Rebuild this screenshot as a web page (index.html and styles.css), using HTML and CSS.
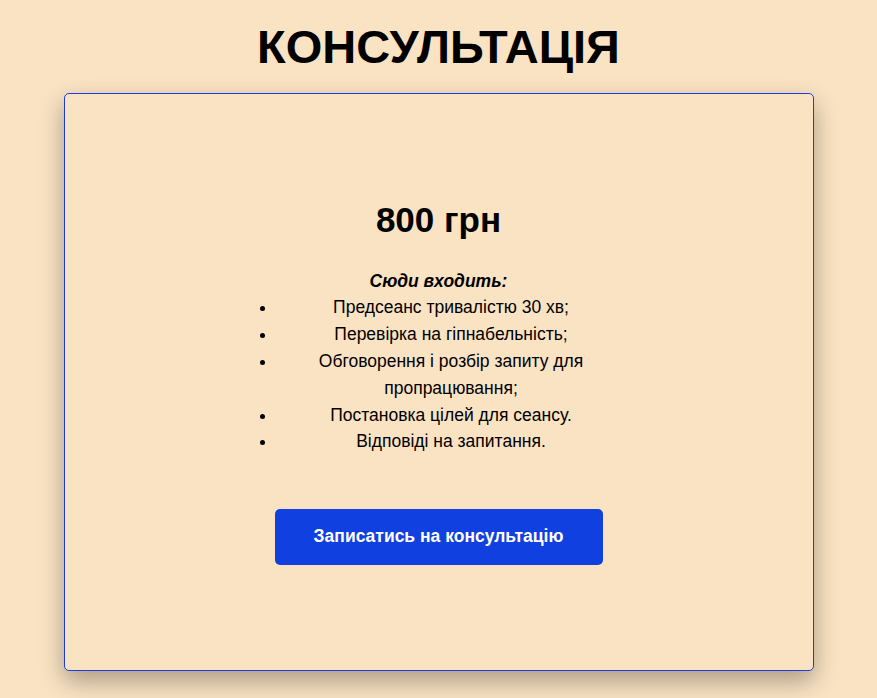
FILE: index.html
```html
<!DOCTYPE html>
<html lang="uk">
<head>
<meta charset="utf-8">
<link rel="stylesheet" href="styles.css">
</head>
<body>
<main class="page">
  <h1 class="title">КОНСУЛЬТАЦІЯ</h1>
  <section class="card">
    <h2 class="price">800 грн</h2>
    <p class="includes">Сюди входить:</p>
    <ul class="list">
      <li>Предсеанс тривалістю 30 хв;</li>
      <li>Перевірка на гіпнабельність;</li>
      <li>Обговорення і розбір запиту для пропрацювання;</li>
      <li>Постановка цілей для сеансу.</li>
      <li>Відповіді на запитання.</li>
    </ul>
    <button class="btn">Записатись на консультацію</button>
  </section>
</main>
</body>
</html>
```

FILE: styles.css
```css
html, body {
  margin: 0;
  padding: 0;
  background: #fae3c3;
  font-family: "Liberation Sans", Arial, sans-serif;
  color: #000;
}
.page {
  display: flex;
  flex-direction: column;
  align-items: center;
  padding: 17px 0 40px;
}
.title {
  margin: 0;
  font-size: 47px;
  line-height: 60px;
  font-weight: 700;
}
.card {
  box-sizing: border-box;
  width: 750px;
  height: 578px;
  margin-top: 16px;
  border: 1px solid #1a3fe0;
  border-radius: 5px;
  background: #fae3c3;
  box-shadow: 0 10px 25px rgba(0, 0, 0, 0.32);
  display: flex;
  flex-direction: column;
  align-items: center;
  justify-content: center;
}
.price {
  margin: 0;
  font-size: 35px;
  line-height: 42px;
  font-weight: 700;
}
.includes {
  margin: 26.6px 0 0;
  font-size: 17.5px;
  line-height: 26.8px;
  font-weight: 700;
  font-style: italic;
}
.list {
  box-sizing: content-box;
  width: 349px;
  margin: 0 auto;
  padding: 0 0 0 25px;
  font-size: 17.5px;
  line-height: 26.8px;
  text-align: center;
}
.btn {
  margin-top: 53.8px;
  width: 328px;
  height: 56px;
  border: none;
  border-radius: 5px;
  background: #1140e0;
  color: #fff;
  font-family: "Liberation Sans", Arial, sans-serif;
  font-size: 17.5px;
  font-weight: 700;
  cursor: pointer;
}
```
